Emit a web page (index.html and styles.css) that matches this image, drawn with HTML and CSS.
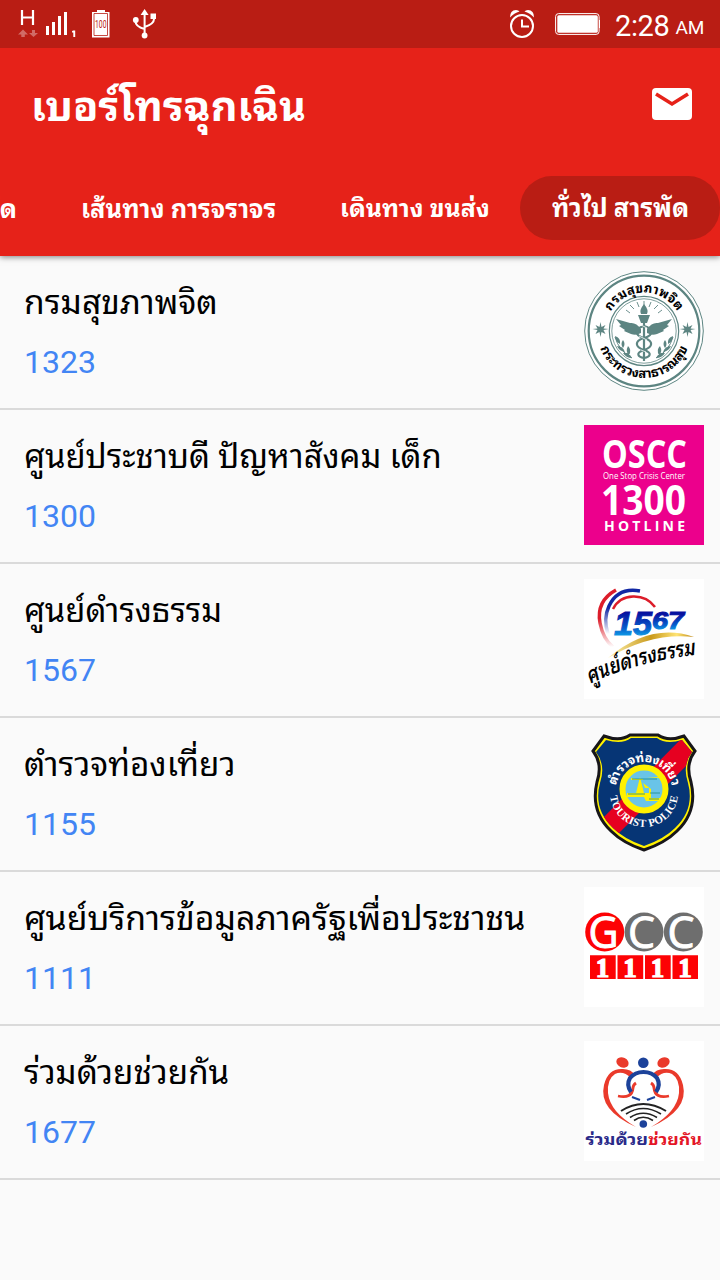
FILE: index.html
```html
<!DOCTYPE html>
<html lang="th">
<head>
<meta charset="utf-8">
<title>เบอร์โทรฉุกเฉิน</title>
<link rel="stylesheet" href="styles.css">
</head>
<body>
<div class="status">
  <svg class="status-left" width="170" height="48" viewBox="0 0 170 48" fill="#fff">
    <path d="M22 10v15M33 10v15M22 17.500h11" stroke="#fff" stroke-width="2.200" fill="none"/>
    <path d="M18 34.500l5-5 5 5h-3.200v2.500h-3.500v-2.500zM29 33l4.500 4 4.500-4h-3v-3h-3v3z" opacity=".35"/>
    <path d="M46 26h3v9h-3zM52 22h3v13h-3zM58 16h3v19h-3zM64 12h3v23h-3zM73 30.500h2.200v6.500h-1.900v-4.500h-1.300v-1.200z"/>
    <path d="M97 10h8v2h4.500v25.500H92V12h5z"/>
    <path d="M94 13.500h13.500v22H94z" fill="none" stroke="#b91d14" stroke-width=".8"/>
    <text class="tiny" x="95" y="27.500" textLength="11.500" lengthAdjust="spacingAndGlyphs" fill="#b91d14">100</text>
    <path d="M144.600 36V13M135.500 20v1.500q0 5 9 7.500M154 17v2q0 5-9.400 8" fill="none" stroke="#fff" stroke-width="2"/>
    <path d="M144.600 9l4 6h-8zM150.500 13.500h5.500v5.500h-5.500z"/><circle cx="135.800" cy="20" r="2.900"/><circle cx="144.600" cy="35.500" r="2.900"/>
  </svg>
  <div class="status-right">
    <svg width="28" height="30" viewBox="0 0 28 30"><circle cx="14" cy="17" r="11" fill="none" stroke="#fff" stroke-width="2"/><path d="M14 10.500v7h7" fill="none" stroke="#fff" stroke-width="2"/><path d="M2 8.500Q2 1 8 1q2.500 0 3.500 1.500Q6 4 2 8.500zM26 8.500Q26 1 20 1q-2.500 0-3.500 1.500Q22 4 26 8.500z" fill="#fff"/></svg>
    <svg class="battery" width="46" height="22" viewBox="0 0 46 22"><rect x=".6" y=".6" width="43.500" height="20.800" rx="3" fill="none" stroke="#fff"/><rect x="2.300" y="2.300" width="40.500" height="17.500" rx="1.500" fill="#fff"/><path d="M44.500 7v8" stroke="#fff"/></svg>
    <span class="clock">2:28</span><span class="ampm">AM</span>
  </div>
</div>
<header class="header">
  <div class="titlebar">
    <h1 class="title">เบอร์โทรฉุกเฉิน</h1>
    <svg class="mail" width="40" height="32" viewBox="0 0 40 32"><rect width="40" height="32" rx="4" fill="#fff"/><path d="M4 6l16 10L36 6" fill="none" stroke="#e62219" stroke-width="3.600"/></svg>
  </div>
  <nav class="tabs">
    <span class="tab tab-cut">สารพัด</span>
    <span class="tab tab-road">เส้นทาง การจราจร</span>
    <span class="tab tab-travel">เดินทาง ขนส่ง</span>
    <span class="tab tab-active">ทั่วไป สารพัด</span>
  </nav>
</header>
<main class="list">
  <div class="row"><div class="info"><div class="name" style="transform:scaleX(1.018)">กรมสุขภาพจิต</div><div class="phone">1323</div></div>
    <svg class="logo" viewBox="0 0 120 120">
      <defs><path id="a1" d="M21.500 60a38.500 38.500 0 0 1 77 0"/><path id="a2" d="M13 60a47 47 0 0 0 94 0"/></defs>
      <circle cx="60" cy="60" r="59.300" fill="#fff" stroke="#5d8582" stroke-width="1"/>
      <g fill="none" stroke="#5d8582"><circle cx="60" cy="60" r="55.300" stroke-width="2.200"/><circle cx="60" cy="60" r="34.700" stroke-width="1.200"/><circle cx="60" cy="60" r="32.200" stroke-width=".8"/>
      <path d="M60 44V90" stroke-width="2.200"/>
      <path d="M60 55c-10 3-10 9 0 12s9 9 0 12-6 7 0 8M60 55c10 3 10 9 0 12s-9 9 0 12 6 7 0 8" stroke-width="2.200"/>
      <path d="M60 35v-5M55 36l-2-5M65 36l2-5M50 38l-4-4M70 38l4-4M46 42l-4-3M74 42l4-3" stroke-width=".9"/>
      <path d="M48 87Q35 80 31 66M72 87Q85 80 89 66" stroke-width="1"/></g>
      <g fill="#5d8582"><path d="M60 33q5 6 3 10h-6q-2-4 3-10zM54 44h12l-3 8h-6z"/>
      <path d="M57 58Q52 51 46 52L32 48l5 6-2 1 6 4-1 1 7 3q5 2 10-1zM63 58Q68 51 74 52l14-4-5 6 2 1-6 4 1 1-7 3q-5 2-10-1z"/>
      <path d="M31 65q6 2 5 8-5-3-5-8zM39 69q3 4 0 8-3-4 0-8zM33 75q6 0 8 6-6-1-8-6zM44 75q4 4 1 9-4-3-1-9zM39 82q6-1 9 5-6 0-9-5zM89 65q-6 2-5 8 5-3 5-8zM81 69q-3 4 0 8 3-4 0-8zM87 75q-6 0-8 6 6-1 8-6zM76 75q-4 4-1 9 4-3 1-9zM81 82q-6-1-9 5 6 0 9-5z"/>
      <path id="star" d="M16.500 51l1 5 4-2-2 3.500 5 .500-5 1 2 4-4-2-1 5-1-5-4 2 2-4-5-1 5-.5-2-3.500 4 2z"/><use href="#star" x="87"/></g>
      <path d="M57 54l6 3M55 65l8 4M57 79l5 2" stroke="#fff" stroke-width=".8"/>
      <text class="thai seal"><textPath href="#a1" startOffset="50%" text-anchor="middle" textLength="80">กรมสุขภาพจิต</textPath></text>
      <text class="thai seal"><textPath href="#a2" startOffset="50%" text-anchor="middle" textLength="112">กระทรวงสาธารณสุข</textPath></text>
    </svg></div>
  <div class="row"><div class="info"><div class="name" style="transform:scaleX(.996)">ศูนย์ประชาบดี ปัญหาสังคม เด็ก</div><div class="phone">1300</div></div>
    <svg class="logo" viewBox="0 0 120 120"><path fill="#ec008c" d="M0 0h120v120H0z"/><g class="hotline">
      <text x="18" y="43" font-size="39" textLength="85" lengthAdjust="spacingAndGlyphs">OSCC</text>
      <text class="light" x="19" y="54" font-size="8.500" textLength="82" lengthAdjust="spacingAndGlyphs">One Stop Crisis Center</text>
      <text x="17" y="90" font-size="41" textLength="85" lengthAdjust="spacingAndGlyphs">1300</text>
      <text x="20" y="105.700" font-size="14" textLength="81">HOTLINE</text></g></svg></div>
  <div class="row"><div class="info"><div class="name" style="transform:scaleX(.993)">ศูนย์ดำรงธรรม</div><div class="phone">1567</div></div>
    <svg class="logo" viewBox="0 0 120 120">
      <defs><linearGradient id="b" x1="0" y1="0" x2="0" y2="1"><stop offset=".25" stop-color="#0712a0"/><stop offset=".65" stop-color="#075dcb"/><stop offset="1" stop-color="#13cafa"/></linearGradient>
      <linearGradient id="r" x1="0" y1="0" x2="0" y2="1"><stop offset=".5" stop-color="#dc1d2a"/><stop offset="1" stop-color="#fff"/></linearGradient>
      <linearGradient id="bl" x1="0" y1="0" x2="0" y2="1"><stop offset=".4" stop-color="#1127a4"/><stop offset="1" stop-color="#fff"/></linearGradient>
      <linearGradient id="g"><stop stop-color="#fff2ae"/><stop offset=".5" stop-color="#c99a1c"/><stop offset=".8" stop-color="#ffe475"/><stop offset="1" stop-color="#bd8510"/></linearGradient>
      <path id="c" d="M6 105Q50 83 118 75"/></defs>
      <path fill="#fff" d="M0 0h120v120H0z"/>
      <path d="M32 11Q12 22 16 44q3 16 13 24" fill="none" stroke="url(#r)" stroke-width="3.500"/>
      <path d="M56 12Q34 8 25 27q-6 13-1 28" fill="none" stroke="url(#bl)" stroke-width="3.500"/>
      <path d="M71 28Q63 17 49 17.500 35 18 29 30" fill="none" stroke="#dc1d2a" stroke-width="2.500"/>
      <g class="digits" fill="url(#b)"><text x="30" y="55.500" font-size="34" textLength="38" lengthAdjust="spacingAndGlyphs">15</text><text x="68" y="50" font-size="23" textLength="32" lengthAdjust="spacingAndGlyphs">67</text></g>
      <path d="M24 79Q67 43 110 58q-42-5-86 21z" fill="url(#g)"/>
      <text class="thai script"><textPath href="#c" textLength="110" lengthAdjust="spacingAndGlyphs">ศูนย์ดำรงธรรม</textPath></text>
    </svg></div>
  <div class="row"><div class="info"><div class="name" style="transform:scaleX(1.009)">ตำรวจท่องเที่ยว</div><div class="phone">1155</div></div>
    <svg class="logo" viewBox="0 0 120 120">
      <defs><path id="d1" d="M32 57a28 28 0 0 1 56 0"/><path id="d2" d="M26 60a34 34 0 0 0 68 0"/><clipPath id="sh"><path d="M47 5H73Q82 12 98 7L108 19Q98 32 104 50 111 76 91 95 80 106 60 113 40 106 29 95 9 76 16 50 22 32 12 19L22 7Q38 12 47 5z"/></clipPath></defs>
      <path d="M46 2H74Q84 9 100 3L111 18Q101 31 107 49 114 78 93 98 81 110 60 117 39 110 27 98 6 78 13 49 19 31 9 18L20 3Q36 9 46 2z" fill="#fff100" stroke="#17161a" stroke-width="3"/>
      <g clip-path="url(#sh)"><path fill="#063575" d="M0 0h120v120H0z"/><path fill="#e60020" d="M100 3L115 20 29 106 15 89z"/></g>
      <circle cx="60" cy="56" r="21.500" fill="#69c4e8" stroke="#fff100" stroke-width="6"/>
      <path d="M43 60h9l3-12 1-4 1 4 3 12h5V55h-4l-2-5 8 6v9h12v3H62l-2-4H43zM47 45l5 1h7v1H47M63 45l12-1v1z" fill="#fff100"/>
      <path d="M44 61h17M66 60h10M65 66h10M48 46h25" fill="none" stroke="#168b89" stroke-width=".8"/>
      <text class="thai police-th"><textPath href="#d1" startOffset="50%" text-anchor="middle" textLength="80">ตำรวจท่องเที่ยว</textPath></text>
      <text class="police"><textPath href="#d2" startOffset="50%" text-anchor="middle" textLength="100">TOURIST POLICE</textPath></text>
    </svg></div>
  <div class="row"><div class="info"><div class="name" style="transform:scaleX(1.026)">ศูนย์บริการข้อมูลภาครัฐเพื่อประชาชน</div><div class="phone">1111</div></div>
    <svg class="logo" viewBox="0 0 120 120"><path fill="#fff" d="M0 0h120v120H0z"/>
      <circle cx="20.700" cy="45" r="19.500" fill="#fd0204"/><circle cx="60" cy="45" r="19.500" fill="#6e6e6e"/><circle cx="99.300" cy="45" r="19.500" fill="#6e6e6e"/>
      <g class="gcc"><text x="4.500" y="60.500" textLength="30" lengthAdjust="spacingAndGlyphs">G</text><text x="44" y="60.500" textLength="27" lengthAdjust="spacingAndGlyphs">C</text><text x="83.500" y="60.500" textLength="27" lengthAdjust="spacingAndGlyphs">C</text></g>
      <path fill="#fd0204" d="M6 68.300h25.700V92H6zM33.500 68.300h25.700V92H33.500zM61 68.300h25.700V92H61zM88.500 68.300h25.500V92H88.500z"/>
      <g class="ones"><text x="18.500" y="89.500">1</text><text x="46" y="89.500">1</text><text x="73.500" y="89.500">1</text><text x="101" y="89.500">1</text></g>
    </svg></div>
  <div class="row"><div class="info"><div class="name" style="transform:scaleX(1.005)">ร่วมด้วยช่วยกัน</div><div class="phone">1677</div></div>
    <svg class="logo" viewBox="0 0 120 120"><path fill="#fff" d="M0 0h120v120H0z"/>
      <g fill="#ea3a2b"><ellipse cx="38.500" cy="21.500" rx="6.400" ry="5" transform="rotate(25 38.500 21.500)"/><ellipse cx="79.500" cy="21.500" rx="6.400" ry="5" transform="rotate(-25 79.500 21.500)"/>
      <path d="M52 86Q14 69 20 44 24 27 39 28q8 0 12 6l-4 3Q39 29 31 33 23 38 24 52q2 19 28 34zM67 86Q105 69 99 44 95 27 80 28q-8 0-12 6l4 3q8-8 16-4 8 5 7 19-2 19-28 34z"/></g>
      <path d="M34 55q14 3 15-8 0-3 3-5M85 55q-14 3-15-8 0-3-3-5" fill="none" stroke="#ea3a2b" stroke-width="2.800"/>
      <g fill="none" stroke="#1c429a"><path d="M47 51Q42 44 46 37 51 31 59.500 31t13.500 6q4 7-1 14" stroke-width="4.200"/><path d="M48 56l8 3M63 59l8-3" stroke-width="2"/></g>
      <circle cx="59.300" cy="21.800" r="5.300" fill="#1c429a"/><circle cx="59.300" cy="83" r="3.800" fill="#1c429a"/>
      <g fill="none" stroke="#222"><path d="M37 70Q59 56 82 70" stroke-width="2"/><path d="M42 73Q59 62 77 73M46 76.500Q59 68 73 76.500M50 79.500Q59 73 69 79.500" stroke-width="1.600"/></g>
      <text class="thai together" x="1.500" y="104" fill="#292a89" textLength="62.500" lengthAdjust="spacingAndGlyphs">ร่วมด้วย</text><text class="thai together" x="64" y="104" fill="#e41627" textLength="54" lengthAdjust="spacingAndGlyphs">ช่วยกัน</text>
    </svg></div>
</main>
</body>
</html>
```
FILE: styles.css
```css
* { box-sizing: border-box; }
body { margin: 0; width: 720px; height: 1280px; overflow: hidden; background: #fafafa; font-family: Roboto, "Noto Sans Thai Looped", "Noto Sans Thai", "Noto Sans", sans-serif; }
svg { display: block; flex: none; }
.status { position: relative; z-index: 1; height: 48px; background: #b91d14; display: flex; justify-content: space-between; color: #fff; }
.tiny { font: 10px Roboto, sans-serif; }
.status-right { display: flex; align-items: center; padding-right: 16px; white-space: nowrap; }
.battery { margin: 0 14px 0 19px; }
.clock { font-size: 29px; line-height: 48px; padding-top: 3px; letter-spacing: -.3px; }
.ampm { font-size: 19px; line-height: 48px; padding: 8px 0 0 6px; letter-spacing: -.3px; }
.header { height: 208px; background: #e62219; color: #fff; box-shadow: 0 1px 6px rgba(0,0,0,.5); overflow: hidden; }
.titlebar { height: 112px; display: flex; align-items: center; justify-content: space-between; padding: 0 28px 0 31px; }
.title { margin: 0; padding-top: 5px; font-size: 41.4px; font-weight: 700; line-height: 60px; }
.tabs { height: 96px; padding-top: 16px; display: flex; justify-content: flex-end; }
.tab { flex: none; height: 64px; line-height: 66px; padding: 0 32px; font-size: 25.400px; font-weight: 700; white-space: nowrap; }
.tab-road { width: 259px; }
.tab-travel { width: 212px; font-size: 24.900px; }
.tab-active { width: 200px; background: #b91d14; border-radius: 32px; font-size: 25.300px; }
.row { height: 154px; border-bottom: 2px solid #dadada; display: flex; justify-content: space-between; padding: 15px 16px 0 24px; }
.info { white-space: nowrap; padding-top: 1px; }
.name { width: max-content; font-size: 33px; line-height: 62px; margin-bottom: -2px; color: #000; transform-origin: 0 50%; }
.phone { font-size: 32px; line-height: 60px; color: #4285f4; }
.logo { width: 120px; height: 120px; }
.thai { font-family: "Noto Sans Thai Looped", "Noto Sans Thai", "Noto Sans", sans-serif; font-weight: 700; }
.seal { font-size: 13px; }
.hotline { font-family: "Open Sans", sans-serif; font-weight: 700; fill: #fff; }
.hotline .light { font-weight: 400; }
.digits { font-family: "Liberation Sans", sans-serif; font-weight: 700; font-style: italic; stroke: url(#b); stroke-width: 1px; }
.script { font-size: 22px; font-style: italic; font-weight: 600; }
.police-th { font-size: 12.500px; fill: #fff; }
.police { font: bold 11px "Liberation Serif", serif; fill: #fff; }
.gcc { font: 44px "Open Sans", sans-serif; fill: #fff; stroke: #fff; stroke-width: 1px; }
.ones { font: bold 27px "Liberation Serif", serif; fill: #fff; stroke: #fff; stroke-width: 1.2px; text-anchor: middle; }
.together { font-size: 16px; }
```
